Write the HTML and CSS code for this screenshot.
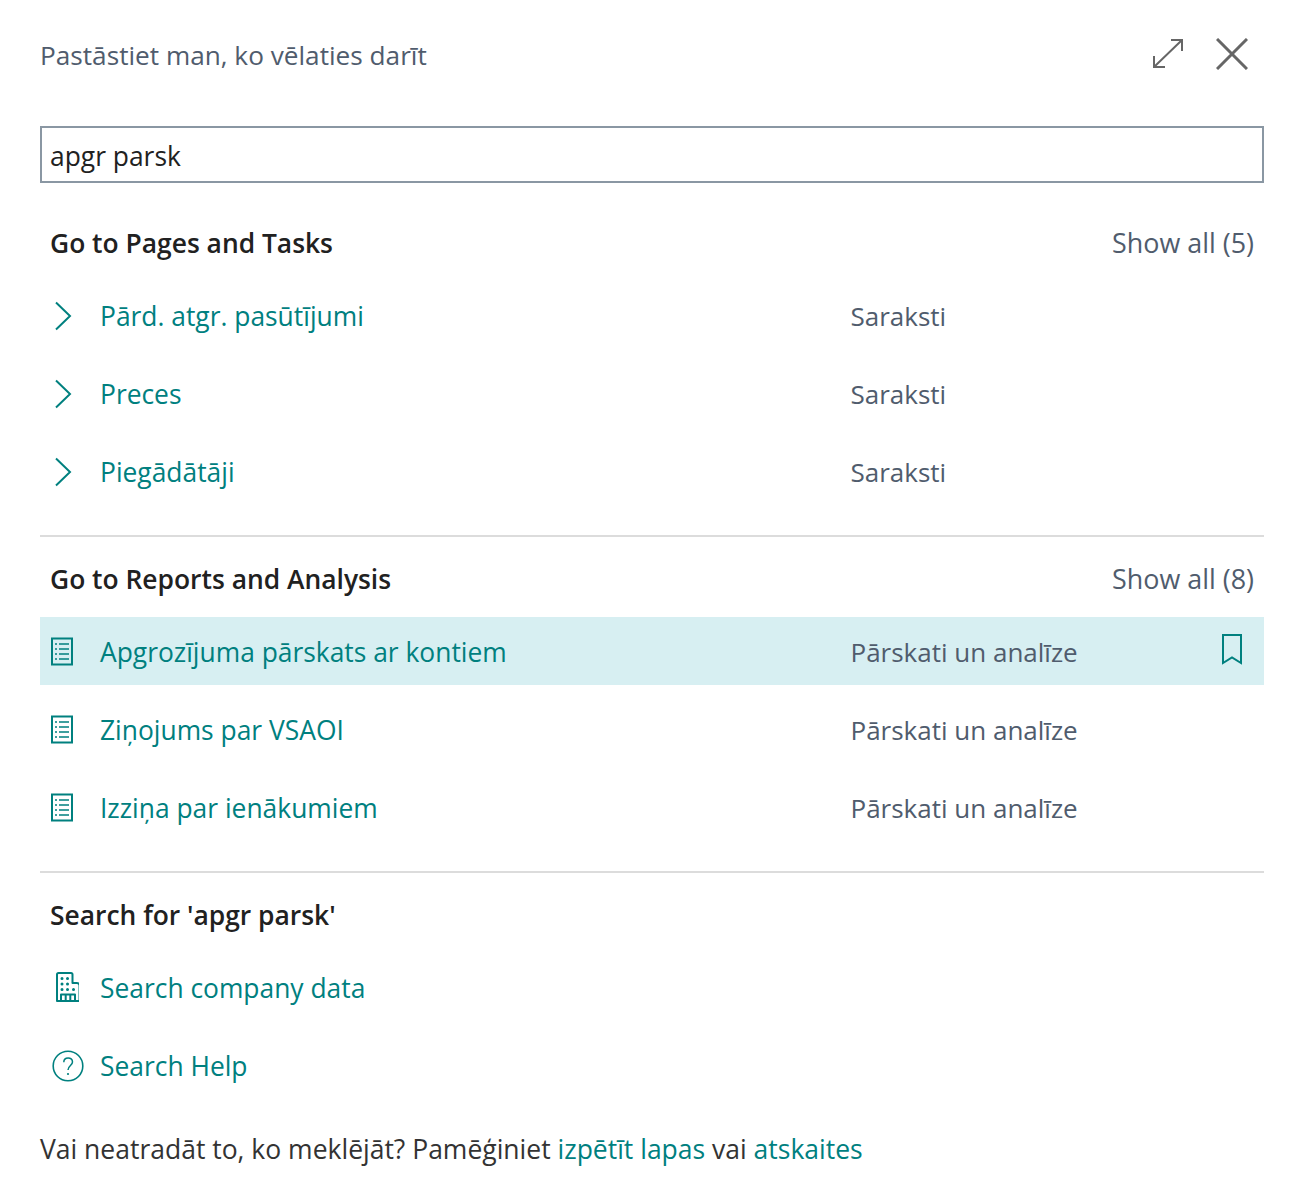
FILE: index.html
```html
<!DOCTYPE html>
<html lang="lv">
<head>
    <meta charset="UTF-8">
    <meta name="viewport" content="width=device-width, initial-scale=1.0">
    <title>Pastāstiet man, ko vēlaties darīt</title>
    <link rel="stylesheet" href="styles.css">
</head>
<body>
    <svg class="sprites" width="0" height="0">
        <symbol id="chevron" viewBox="0 0 34 34">
            <path d="M11 4.5 L25 18 L11 31.5" fill="none" stroke="currentColor" stroke-width="2"/>
        </symbol>
        <symbol id="report" viewBox="0 0 34 34">
            <path d="M7 4.5 H27 V30.5 H7 Z" fill="none" stroke="currentColor" stroke-width="2"/>
            <path d="M10 10 H12 M14 10 H24 M10 15 H12 M14 15 H24 M10 20 H12 M14 20 H24 M10 25 H12 M14 25 H24" fill="none" stroke="currentColor" stroke-width="1.6"/>
        </symbol>
    </svg>

    <div class="container">
        <header class="top">
            <h1>Pastāstiet man, ko vēlaties darīt</h1>
            <div class="top-buttons">
                <svg class="expand" viewBox="0 0 32 32" width="32" height="32">
                    <path d="M2 29 L30 2 M19 2 H30 V13 M2 18 V29 H13" fill="none" stroke="#666" stroke-width="2"/>
                </svg>
                <svg class="close" viewBox="0 0 32 32" width="32" height="32">
                    <path d="M1 1 L31 31 M31 1 L1 31" fill="none" stroke="#666" stroke-width="3"/>
                </svg>
            </div>
        </header>

        <input class="search" type="text" value="apgr parsk">

        <section class="group">
            <div class="group-head">
                <h2>Go to Pages and Tasks</h2>
                <span class="show-all">Show all (5)</span>
            </div>
            <div class="row">
                <svg class="icon"><use href="#chevron"/></svg>
                <span class="name">Pārd. atgr. pasūtījumi</span>
                <span class="kind">Saraksti</span>
            </div>
            <div class="row">
                <svg class="icon"><use href="#chevron"/></svg>
                <span class="name">Preces</span>
                <span class="kind">Saraksti</span>
            </div>
            <div class="row">
                <svg class="icon"><use href="#chevron"/></svg>
                <span class="name">Piegādātāji</span>
                <span class="kind">Saraksti</span>
            </div>
        </section>

        <section class="group">
            <div class="group-head">
                <h2>Go to Reports and Analysis</h2>
                <span class="show-all">Show all (8)</span>
            </div>
            <div class="row selected">
                <svg class="icon"><use href="#report"/></svg>
                <span class="name">Apgrozījuma pārskats ar kontiem</span>
                <span class="kind">Pārskati un analīze</span>
                <svg class="bookmark" viewBox="0 0 22 32" width="22" height="32">
                    <path d="M2 2 H20 V30 L11 24.5 L2 30 Z" fill="none" stroke="currentColor" stroke-width="2"/>
                </svg>
            </div>
            <div class="row">
                <svg class="icon"><use href="#report"/></svg>
                <span class="name">Ziņojums par VSAOI</span>
                <span class="kind">Pārskati un analīze</span>
            </div>
            <div class="row">
                <svg class="icon"><use href="#report"/></svg>
                <span class="name">Izziņa par ienākumiem</span>
                <span class="kind">Pārskati un analīze</span>
            </div>
        </section>

        <section class="group last">
            <div class="group-head">
                <h2>Search for 'apgr parsk'</h2>
            </div>
            <div class="row">
                <svg class="icon" viewBox="-5 0 34 34">
                    <path d="M7 31 V4.5 Q7 3 8.5 3 H21 Q22.5 3 22.5 4.5 V13 H27 Q29.5 13 29.5 15.5 V31 Z M11 31 V24.5 H25 V31 M15.7 24.5 V31 M20.3 24.5 V31" fill="none" stroke="currentColor" stroke-width="2" stroke-linejoin="round"/>
                    <path d="M12 8.5 h.01 M17.5 8.5 h.01 M12 14 h.01 M17.5 14 h.01 M12 19.5 h.01 M17.5 19.5 h.01 M23.5 19.5 h.01" fill="none" stroke="currentColor" stroke-width="3" stroke-linecap="round"/>
                </svg>
                <span class="name">Search company data</span>
            </div>
            <div class="row">
                <svg class="icon help" viewBox="0 -1 34 34">
                    <circle cx="17" cy="17" r="14.8" fill="none" stroke="currentColor" stroke-width="1.6"/>
                    <path d="M12.8 13.2 C12.8 7.5 21.5 7.5 21.5 13 C21.5 16.5 17 16.5 17 21" fill="none" stroke="currentColor" stroke-width="1.5"/>
                    <circle cx="17" cy="25" r="1.1" fill="currentColor"/>
                </svg>
                <span class="name">Search Help</span>
            </div>
        </section>

        <p class="footer">Vai neatradāt to, ko meklējāt? Pamēģiniet <a href="#">izpētīt lapas</a> vai <a href="#">atskaites</a></p>
    </div>
</body>
</html>
```

FILE: styles.css
```css
* {
    margin: 0;
    padding: 0;
    box-sizing: border-box;
}

body {
    font-family: "Open Sans", "Noto Sans", Arial, sans-serif;
    font-size: 26.4px;
    color: #212121;
    background-color: white;
}

.sprites {
    display: block;
    height: 0;
}

.container {
    width: 1224px;
    margin-left: 40px;
}

.top {
    display: flex;
    justify-content: space-between;
    align-items: center;
    height: 110px;
}

h1 {
    font-size: 26.2px;
    font-weight: 400;
    color: #505c6d;
}

.top-buttons {
    display: flex;
    align-items: center;
    gap: 32px;
    padding: 0 16px 2px 0;
}

.top-buttons svg {
    display: block;
}

.search {
    display: block;
    width: 100%;
    height: 57px;
    padding: 3px 8px 0;
    margin-top: 16px;
    font-family: inherit;
    font-size: 26.4px;
    color: #212121;
    border: 2px solid #8a97a3;
}

.group {
    padding-bottom: 30px;
    margin-bottom: 9px;
    border-bottom: 2px solid #dcdcdc;
}

.group:first-of-type {
    margin-top: 27px;
}

.group.last {
    border-bottom: none;
    margin-bottom: 0;
    padding-bottom: 0;
}

.group-head {
    display: flex;
    justify-content: space-between;
    align-items: center;
    height: 68px;
    padding: 0 10px 2px;
    margin-bottom: 3px;
}

h2 {
    font-size: 26.4px;
    font-weight: 600;
    color: #212121;
}

.show-all {
    padding-bottom: 2px;
    font-size: 26.9px;
    color: #505c6d;
}

.row {
    display: flex;
    align-items: center;
    height: 68px;
    margin-bottom: 10px;
    padding: 0 21px 0 5px;
    color: #00807f;
}

.row:last-child {
    margin-bottom: 0;
}

.row.selected {
    background-color: #d7eff2;
}

.icon {
    width: 34px;
    height: 34px;
    flex-shrink: 0;
}

.icon.help {
    margin-left: 6px;
    margin-right: -6px;
}

.name {
    width: 750.5px;
    padding-top: 2px;
    margin-left: 21px;
}

.kind {
    flex: 1;
    padding-top: 1px;
    font-size: 26px;
    color: #505c6d;
}

.bookmark {
    display: block;
    margin-bottom: 5px;
}

.footer {
    margin-top: 32px;
    font-size: 26.5px;
    color: #333;
}

.footer a {
    color: #00807f;
    text-decoration: none;
}
```
